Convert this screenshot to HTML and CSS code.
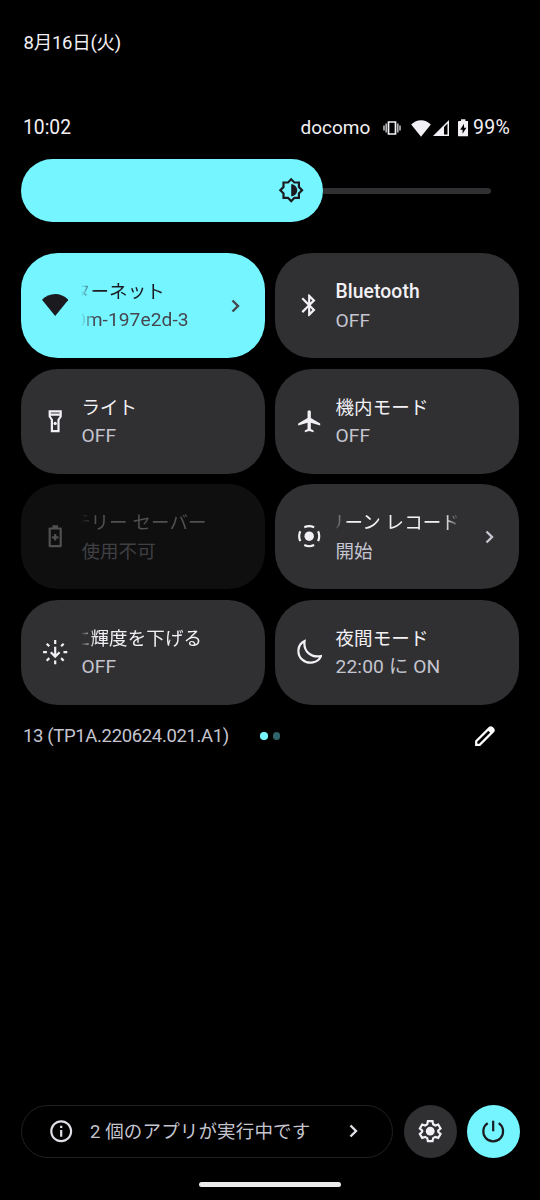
FILE: index.html
```html
<!DOCTYPE html>
<html lang="ja">
	<head>
		<meta charset="utf-8">
		<title>Quick Settings</title>
		<link rel="stylesheet" href="styles.css">
	</head>

	<body>
		<div class="date">8月16日(火)</div>
		<div class="status">
			<span class="clock">10:02</span>
			<span class="carrier">docomo</span>
			<svg class="vibrate" viewBox="0 0 18 14"><path d="M5.5 1h7v12h-7z" fill="none" stroke="#f3f0f5" stroke-width="1.7"/><path d="M3.200 2.600v8.800M1 4.600v4.800M14.800 2.600v8.800M17 4.600v4.800" stroke="#c4c2c6" stroke-width="1.500"/></svg>
			<svg class="signal-wifi" viewBox="0 0 20 17"><path d="M.2 4.500C3 1.700 6.400 .2 10 .2s7 1.500 9.800 4.300L10 16.700z"/></svg>
			<svg class="signal-cell" viewBox="0 0 16 16"><path fill-rule="evenodd" d="M0 16L16 0v16zM11 7v7.500h3.500V3.600z"/></svg>
			<svg class="battery" viewBox="0 0 11 18"><path fill-rule="evenodd" d="M3.200 0h4.600v1.800H10q1 0 1 1V17q0 1-1 1H1q-1 0-1-1V2.800q0-1 1-1h2.200zM6.300 4.800L2.300 11h2.500v4.200L8.800 9H6.300z"/></svg>
			<span class="percent">99%</span>
		</div>

		<div class="slider">
			<div class="level">
				<svg viewBox="0 0 24 24"><path d="M20 8.690V4h-4.690L12 .690 8.690 4H4v4.690L.690 12 4 15.310V20h4.690L12 23.310 15.310 20H20v-4.690L23.310 12 20 8.690zm-2 5.790V18h-3.520L12 20.480 9.520 18H6v-3.520L3.520 12 6 9.520V6h3.520L12 3.520 14.480 6H18v3.520L20.480 12 18 14.480zM12 6.500v11c3.030 0 5.500-2.470 5.500-5.500S15.030 6.500 12 6.500z"/></svg>
			</div>
			<div class="track"></div>
		</div>

		<div class="tiles">
			<div class="tile on">
				<svg class="icon" viewBox="0 0 26 26"><path d="M0 7.700C3.600 4 8.200 2 13 2s9.400 2 13 5.700L13 23.700z"/></svg>
				<div class="label">
					<div class="name fade scroll">ターネット</div>
					<div class="state fade network">0m-197e2d-3</div>
				</div>
				<svg class="chevron" viewBox="0 0 9 14"><path d="M1.500 1.500L7 7l-5.500 5.500"/></svg>
			</div>
			<div class="tile">
				<svg class="icon" viewBox="0 0 24 24"><path d="M17.710 7.710L12 2h-1v7.590L6.410 5 5 6.410 10.590 12 5 17.590 6.410 19 11 14.410V22h1l5.710-5.710-4.300-4.290 4.300-4.290zM13 5.830l1.880 1.880L13 9.590V5.830zm1.880 10.460L13 18.170v-3.760l1.880 1.880z"/></svg>
				<div class="label">
					<div class="name latin">Bluetooth</div>
					<div class="state wide">OFF</div>
				</div>
			</div>
			<div class="tile">
				<svg class="icon" viewBox="0 0 24 24"><path fill-rule="evenodd" d="M6 2v6l2 3v11h8V11l2-3V2zm10 2v1H8V4zm-2 6.400V20h-4v-9.600L8 7.400V7h8v.4z"/><circle cx="12" cy="14" r="1.500"/></svg>
				<div class="label">
					<div class="name">ライト</div>
					<div class="state wide">OFF</div>
				</div>
			</div>
			<div class="tile">
				<svg class="icon" viewBox="0 0 24 24"><path d="M22 16v-2l-8.500-5V3.500C13.500 2.670 12.830 2 12 2s-1.500.670-1.500 1.500V9L2 14v2l8.500-2.500V19L8 20.500V22l4-1 4 1v-1.500L13.500 19v-5.500L22 16z"/></svg>
				<div class="label">
					<div class="name">機内モード</div>
					<div class="state wide">OFF</div>
				</div>
			</div>
			<div class="tile disabled">
				<svg class="icon" viewBox="0 0 24 24"><path fill-rule="evenodd" d="M15.500 4H14.500V2h-5v2H7q-1 0-1 1v16q0 1 1 1h10q1 0 1-1V5q0-1-1-1zM16 20H8V6h8zM11 10v2H9v2h2v2h2v-2h2v-2h-2v-2z"/></svg>
				<div class="label">
					<div class="name fade scroll">テリー セーバー</div>
					<div class="state">使用不可</div>
				</div>
			</div>
			<div class="tile">
				<svg class="icon" viewBox="0 0 24 24"><circle cx="12" cy="12" r="4.300"/><path class="line" d="M7.500 3.900Q12 1.800 16.500 3.900M7.500 20.100Q12 22.200 16.500 20.100M3.900 7.500Q1.800 12 3.900 16.500M20.100 7.500Q22.200 12 20.100 16.500"/></svg>
				<div class="label">
					<div class="name fade both scroll">リーン レコード</div>
					<div class="state">開始</div>
				</div>
				<svg class="chevron" viewBox="0 0 9 14"><path d="M1.500 1.500L7 7l-5.500 5.500"/></svg>
			</div>
			<div class="tile">
				<svg class="icon" viewBox="0 0 24 24"><path class="line" d="M12 1v3.500M12 19.500V23M1 12h3.500M19.500 12H23M4.300 4.300l2.300 2.300M17.400 17.400l2.300 2.300M4.300 19.700l2.300-2.300M17.400 6.600l2.300-2.300M12 7v9M8 12l4 4 4-4"/></svg>
				<div class="label">
					<div class="name fade scroll">に輝度を下げる</div>
					<div class="state wide">OFF</div>
				</div>
			</div>
			<div class="tile">
				<svg class="icon" viewBox="0 0 24 24"><path class="line" d="M7.800 1.900C.8 5.200.7 14.500 5.700 18.700c5.600 5 14.500 3 17-3.200C13.500 17.300 6.500 11 7.800 1.900z"/></svg>
				<div class="label">
					<div class="name">夜間モード</div>
					<div class="state wide">22:00 に ON</div>
				</div>
			</div>
		</div>

		<div class="build">
			<span class="version">13 (TP1A.220624.021.A1)</span>
			<span class="dot current"></span>
			<span class="dot"></span>
			<svg class="edit" viewBox="0 0 20 20"><path d="M1.200 18.800v-3.500L14.600 1.900q1.200-1.100 2.300 0l1.200 1.200q1.100 1.200 0 2.300L4.700 18.800z" fill="none" stroke="#fff" stroke-width="2.200"/><path d="M12.500 4l2.500-2.500q1.500-1 3 .5t.5 3L16 7.500z"/></svg>
		</div>

		<div class="footer">
			<div class="apps">
				<svg class="info" viewBox="0 0 24 24"><path d="M11 7h2v2h-2zm0 4h2v6h-2zm1-9C6.480 2 2 6.480 2 12s4.480 10 10 10 10-4.480 10-10S17.520 2 12 2zm0 18c-4.410 0-8-3.590-8-8s3.590-8 8-8 8 3.590 8 8-3.590 8-8 8z"/></svg>
				<span class="running">2 個のアプリが実行中です</span>
				<svg class="chevron" viewBox="0 0 9 14"><path d="M1.500 1.500L7 7l-5.500 5.500"/></svg>
			</div>
			<div class="round">
				<svg class="icon" viewBox="0 0 24 24"><path class="line" d="M9.900 2.900h4.200l.6 2.800 1.900 1.100 2.700-.9 2.100 3.600-2.100 1.900v1.200l2.100 1.900-2.100 3.600-2.700-.9-1.900 1.100-.6 2.800H9.900l-.6-2.800-1.900-1.100-2.700.9-2.100-3.600 2.100-1.900v-1.200L2.600 9.500l2.100-3.600 2.700.9 1.900-1.100z"/><circle cx="12" cy="12" r="4"/></svg>
			</div>
			<div class="round power">
				<svg class="icon" viewBox="0 0 24 24"><path class="line" d="M12 2.500V12M7 4.700a9 9 0 1 0 10 0"/></svg>
			</div>
		</div>
		<div class="handle"></div>
	</body>
</html>
```
FILE: styles.css
```css
*{
	box-sizing: border-box;
}
body{
	margin: 0;
	width: 540px;
	height: 1200px;
	overflow: hidden;
	background: #000;
	color: #f3f0f5;
	font-family: Roboto, "Noto Sans CJK JP", sans-serif;
	font-size: 18.5px;
	line-height: 28px;
	white-space: nowrap;
}
svg{
	display: block;
	flex: none;
	fill: currentColor;
}
.date{
	padding: 29px 0 0 23.500px;
	height: 113px;
	letter-spacing: -.25px;
}
.status{
	display: flex;
	align-items: center;
	height: 30px;
	padding: 0 28px 0 23px;
}
.clock{
	flex: 1;
	font-size: 19.300px;
}
.carrier{
	width: 82px;
	font-size: 19px;
}
.vibrate{
	width: 18px;
	height: 14px;
}
.signal-wifi{
	width: 20px;
	height: 17px;
	margin-left: 10px;
}
.signal-cell{
	width: 16px;
	height: 16px;
	margin-left: 2px;
}
.battery{
	width: 10.5px;
	height: 17.5px;
	margin-left: 9px;
}
.percent{
	width: 39px;
	margin-left: 5px;
	font-size: 19.500px;
	letter-spacing: .3px;
}
.slider{
	display: flex;
	align-items: center;
	margin: 16px 0 31px 21px;
}
.level{
	display: flex;
	align-items: center;
	justify-content: flex-end;
	width: 301.5px;
	height: 63px;
	padding-right: 18px;
	border-radius: 31.5px;
	background: #75f5ff;
	color: #1b1b1f;
}
.level svg{
	width: 26.4px;
	height: 26.4px;
}
.track{
	width: 168px;
	height: 6px;
	border-radius: 0 3px 3px 0;
	background: #303032;
}
.tiles{
	display: grid;
	grid-template-columns: 243.5px 243.5px;
	grid-auto-rows: 105px;
	gap: 10.6px;
	padding: 0 21px;
}
.tile{
	display: flex;
	align-items: center;
	padding: 0 24.500px 0 21px;
	border-radius: 37px;
	background: #303032;
}
.icon{
	width: 26.4px;
	height: 26.4px;
}
.line{
	fill: none;
	stroke: currentColor;
	stroke-width: 2;
}
.label{
	flex: 1;
	min-width: 0;
	margin-left: 13px;
	padding-top: 2px;
}
.name, .state{
	height: 28.500px;
	overflow: hidden;
	letter-spacing: .1px;
}
.state{
	color: #c5c5d0;
}
.latin{
	font-size: 19.300px;
	font-weight: 500;
	letter-spacing: .1px;
}
.wide{
	font-size: 19.200px;
	letter-spacing: .150px;
}
.fade{
	-webkit-mask-image: linear-gradient(to right, transparent, #000 14px);
	mask-image: linear-gradient(to right, transparent, #000 14px);
}
.both{
	width: 124px;
	-webkit-mask-image: linear-gradient(to right, transparent, #000 14px, #000 110px, transparent);
	mask-image: linear-gradient(to right, transparent, #000 14px, #000 110px, transparent);
}
.scroll{
	text-indent: -9.500px;
}
.network{
	font-size: 19.200px;
	text-indent: -6.500px;
	letter-spacing: .050px;
}
.on .label{
	padding-top: 1.500px;
}
.chevron{
	width: 9px;
	height: 14px;
	fill: none;
	stroke: #c5c5d0;
	stroke-width: 2.400;
}
.on{
	background: #75f5ff;
	color: #1b1b1f;
}
.on .state{
	color: #46464f;
}
.on .chevron{
	stroke: #46464f;
}
.disabled{
	background: #0f0f0f;
	color: #505050;
}
.disabled .state{
	color: #404044;
}
.build{
	display: flex;
	align-items: center;
	height: 62px;
	padding-left: 23px;
	color: #c5c5d0;
}
.version{
	width: 237px;
	padding-top: 1px;
	letter-spacing: -.350px;
}
.dot{
	width: 7.500px;
	height: 7.500px;
	margin-right: 5px;
	border-radius: 50%;
	background: #2f6469;
}
.current{
	background: #75f5ff;
}
.edit{
	width: 20px;
	height: 20px;
	margin-left: 190px;
	color: #fff;
}
.footer{
	display: flex;
	align-items: center;
	gap: 10.500px;
	margin-top: 338px;
	padding-left: 21px;
}
.apps{
	display: flex;
	align-items: center;
	width: 372px;
	height: 53px;
	padding: 0 34px 0 25.500px;
	border: 1.400px solid #202022;
	border-radius: 27px;
	color: #c5c5d0;
}
.info{
	width: 26.400px;
	height: 26.400px;
	color: #e0dfe8;
}
.running{
	flex: 1;
	margin-left: 16px;
	padding-top: 2px;
	letter-spacing: .150px;
}
.apps .chevron{
	stroke: #e0dfe8;
}
.round{
	display: flex;
	align-items: center;
	justify-content: center;
	width: 53px;
	height: 53px;
	border-radius: 50%;
	background: #303032;
}
.power{
	background: #75f5ff;
	color: #1b1b1f;
}
.handle{
	width: 142px;
	height: 5px;
	margin: 24px 0 0 199px;
	border-radius: 3px;
	background: #ececec;
}
```
